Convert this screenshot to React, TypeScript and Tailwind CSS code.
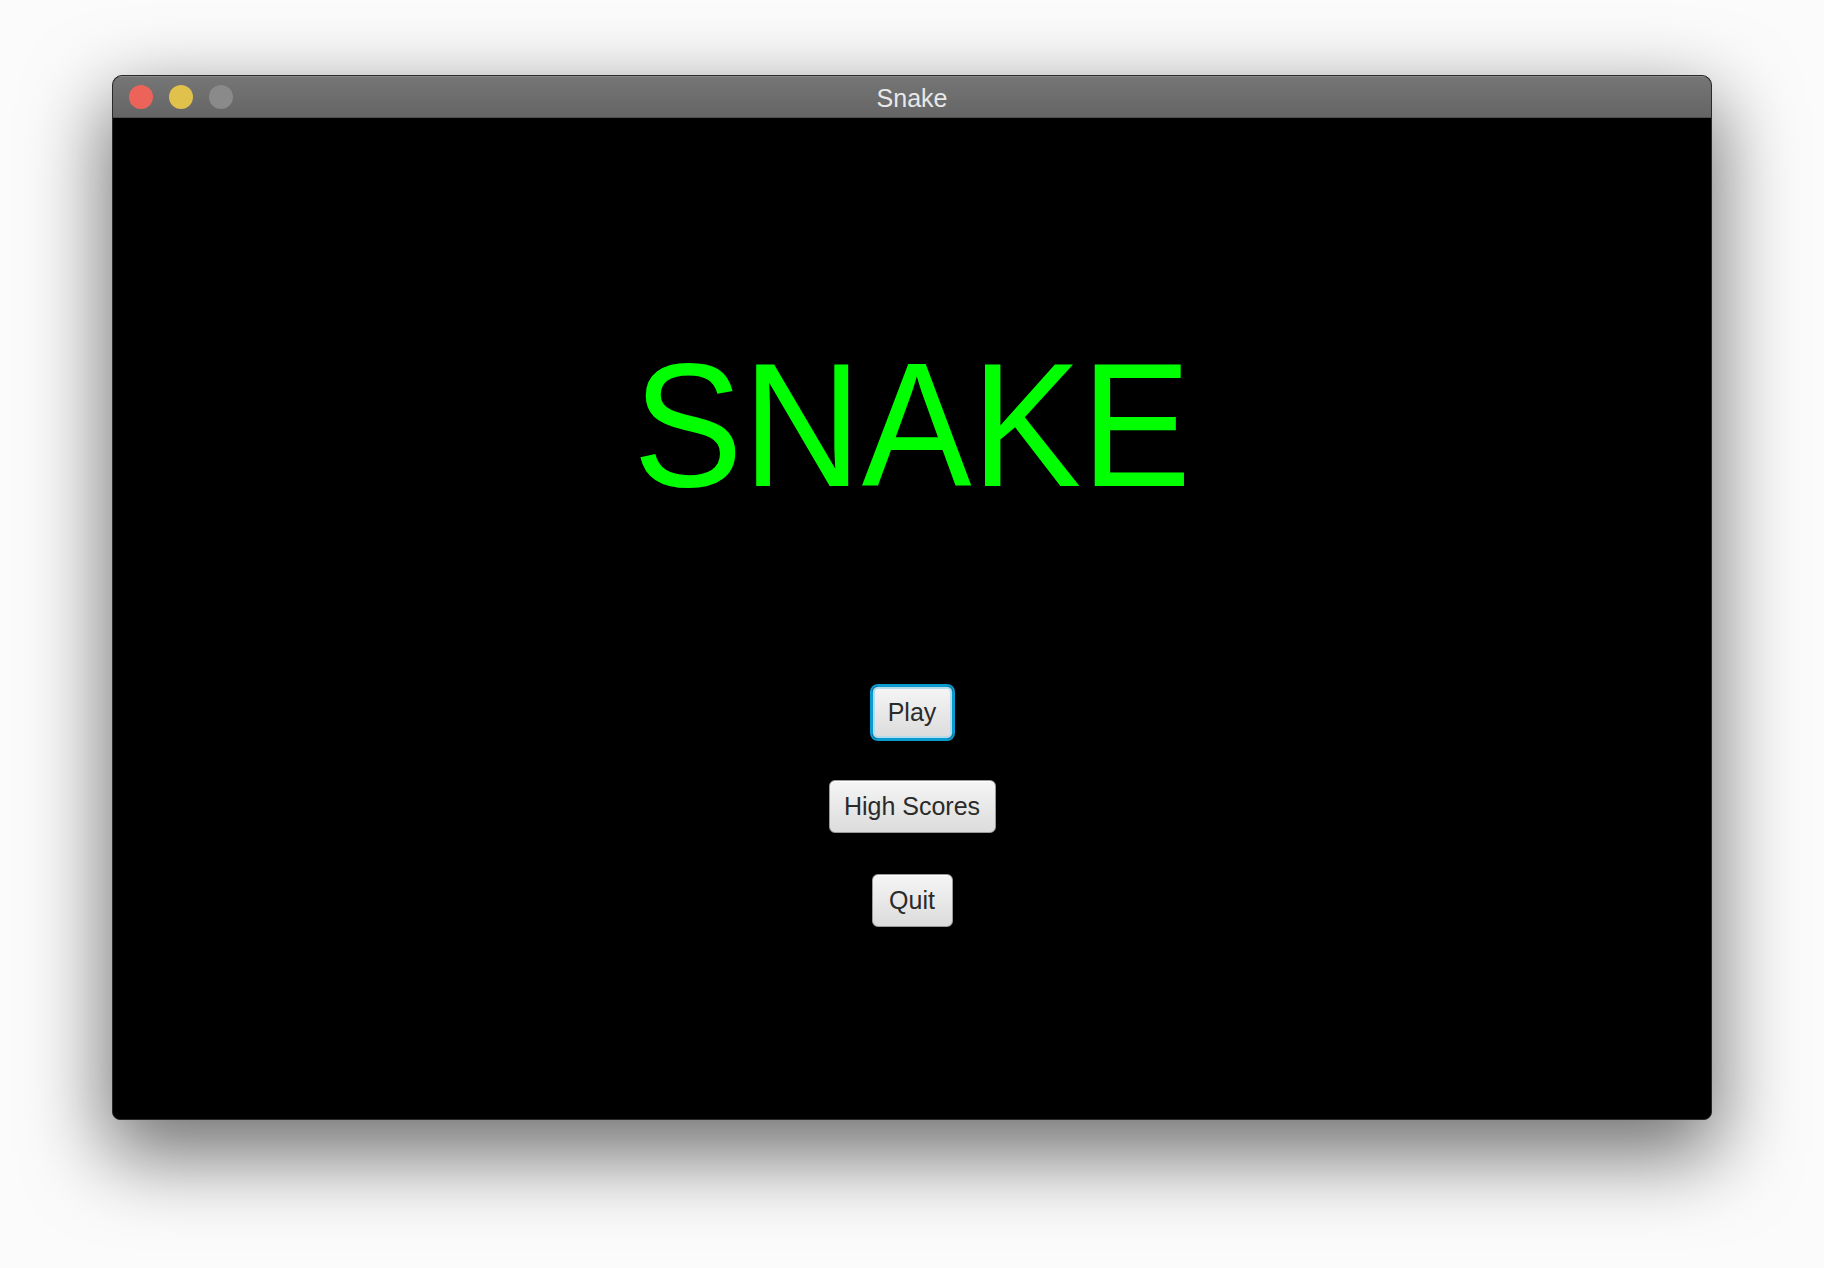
const MenuButton = ({ label, width, focused }: { label: string; width: string; focused?: boolean }) => (
  <button
    className={`${width} h-[53px] rounded-[6px] border bg-gradient-to-b from-[#f5f5f5] to-[#dcdcdc] text-[25px] leading-none text-[#2b2b2b] ${
      focused
        ? "border-[#0a9ad0] shadow-[0_0_0_2px_#0a9ad0,inset_0_0_0_2px_#b5dced]"
        : "border-[#9a9a9a] shadow-[inset_0_1px_0_#ffffff]"
    }`}
  >
    {label}
  </button>
);

const App = () => {
  return (
    <div className="w-[1824px] h-[1268px] bg-[#fbfbfb] pt-[75px] pl-[112px] font-['Liberation_Sans',Arial,sans-serif]">
      <div className="w-[1600px] h-[1045px] flex flex-col rounded-t-[10px] rounded-b-[8px] border border-[#2a2a2a] bg-black overflow-hidden shadow-[0_30px_80px_6px_rgba(0,0,0,0.55)]">
        {/* title bar */}
        <div className="relative h-[42px] flex items-center bg-gradient-to-b from-[#767676] to-[#656565] border-b border-[#4f4f4f] shadow-[inset_0_1px_0_#8a8a8a]">
          <div className="flex items-center gap-4 pl-4">
            <span className="w-6 h-6 rounded-full bg-[#ec6459]" />
            <span className="w-6 h-6 rounded-full bg-[#e0c14c]" />
            <span className="w-6 h-6 rounded-full bg-[#8a8a8a]" />
          </div>
          <div className="absolute inset-0 flex items-center justify-center pt-1 text-[25px] leading-none text-[#e8e8e8]">
            Snake
          </div>
        </div>

        {/* game menu */}
        <div className="flex-1 flex flex-col items-center">
          <div className="mt-[219px] flex justify-center">
            <h1 className="text-[177px] leading-none text-[#00ff00] scale-x-[0.93]">SNAKE</h1>
          </div>
          <div className="mt-[172px] flex flex-col items-center gap-[41px]">
            <MenuButton label="Play" width="w-[81px]" focused />
            <MenuButton label="High Scores" width="w-[167px]" />
            <MenuButton label="Quit" width="w-[81px]" />
          </div>
        </div>
      </div>
    </div>
  );
};

export default App;
